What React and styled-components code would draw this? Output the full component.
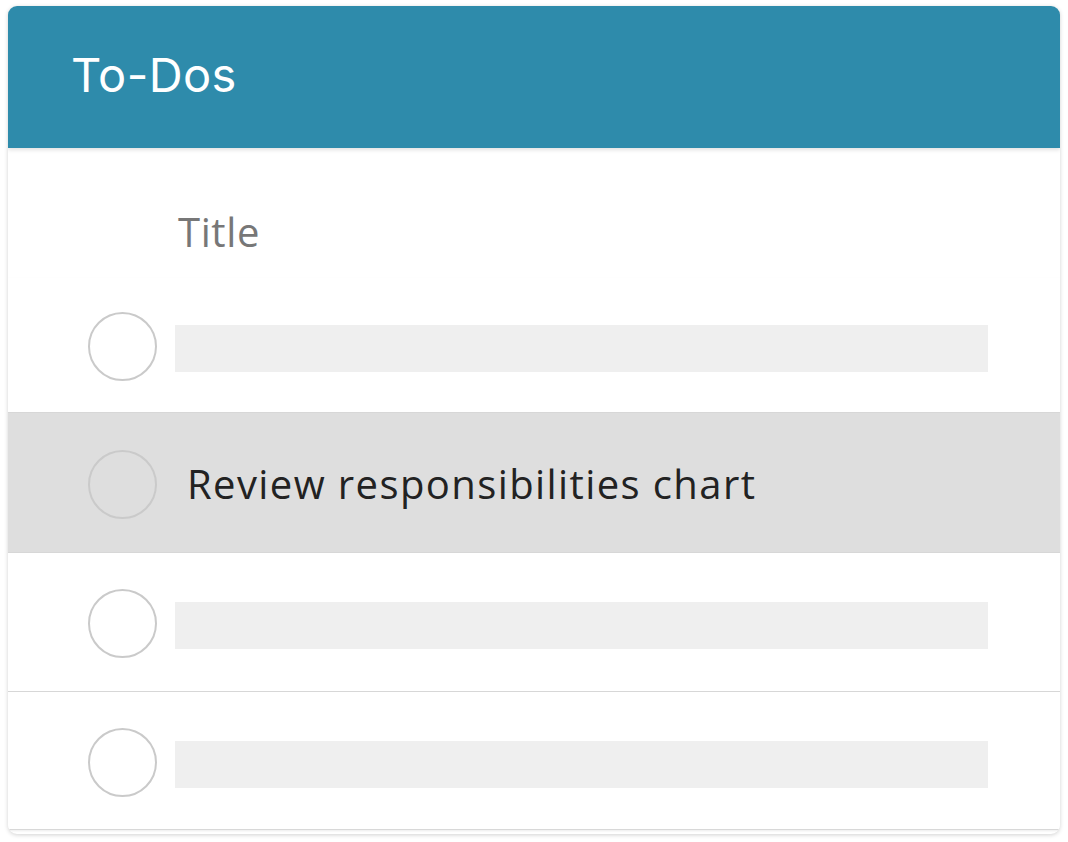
import React from "react";
import styled, { createGlobalStyle } from "styled-components";

const Global = createGlobalStyle`
  html, body { margin: 0; padding: 0; background: #ffffff; }
  body { padding: 6px 8px; font-family: "Open Sans", "Noto Sans", sans-serif; }
  * { box-sizing: border-box; }
`;

const Card = styled.div`
  width: 1052px;
  border-radius: 9px;
  background: #ffffff;
  box-shadow: 0 1px 4px rgba(0, 0, 0, 0.18);
  overflow: hidden;
  padding-bottom: 4px;
`;

const Header = styled.div`
  height: 142px;
  background: #2e8bab;
  display: flex;
  align-items: center;
  padding-left: 63px;
  padding-bottom: 6px;
  position: relative;
  z-index: 2;
  box-shadow: 0 2px 4px rgba(0, 0, 0, 0.12);
`;

const HeaderTitle = styled.h1`
  margin: 0;
  font-family: Inter, "Noto Sans", sans-serif;
  font-weight: 400;
  font-size: 47px;
  color: #ffffff;
  letter-spacing: 0.4px;
`;

const ColumnHead = styled.div`
  height: 130px;
  display: flex;
  align-items: center;
  padding-left: 170px;
  padding-top: 36px;
  font-family: "Open Sans", "Noto Sans", sans-serif;
  font-size: 40px;
  letter-spacing: 0.6px;
  color: #777777;
`;

const Row = styled.div`
  height: ${(p) => p.$h || 139}px;
  display: flex;
  align-items: center;
  padding: 3px 72px 0 80px;
  gap: 20px;
  background: ${(p) => (p.$active ? "#dedede" : "#ffffff")};
  border-bottom: 1px solid #d8d8d8;
  box-shadow: 0 1px 2px rgba(0, 0, 0, 0.08);
  position: relative;
`;

const Check = styled.span`
  width: 69px;
  height: 69px;
  flex: none;
  border-radius: 50%;
  border: 2px solid #cacaca;
  background: transparent;
`;

const Placeholder = styled.div`
  flex: 1;
  height: 47px;
  margin-left: -2px;
  margin-top: 4px;
  background: #efefef;
`;

const RowText = styled.span`
  font-family: "Open Sans", "Noto Sans", sans-serif;
  font-size: 40px;
  color: #222222;
  margin-left: 10px;
  margin-bottom: 2px;
  letter-spacing: 1.4px;
`;

export default function App() {
  return (
    <>
      <Global />
      <Card>
        <Header>
          <HeaderTitle>To-Dos</HeaderTitle>
        </Header>
        <ColumnHead>Title</ColumnHead>
        <Row $h={135}>
          <Check />
          <Placeholder />
        </Row>
        <Row $active $h={140}>
          <Check />
          <RowText>Review responsibilities chart</RowText>
        </Row>
        <Row $h={139}>
          <Check />
          <Placeholder />
        </Row>
        <Row $h={138}>
          <Check />
          <Placeholder />
        </Row>
      </Card>
    </>
  );
}
